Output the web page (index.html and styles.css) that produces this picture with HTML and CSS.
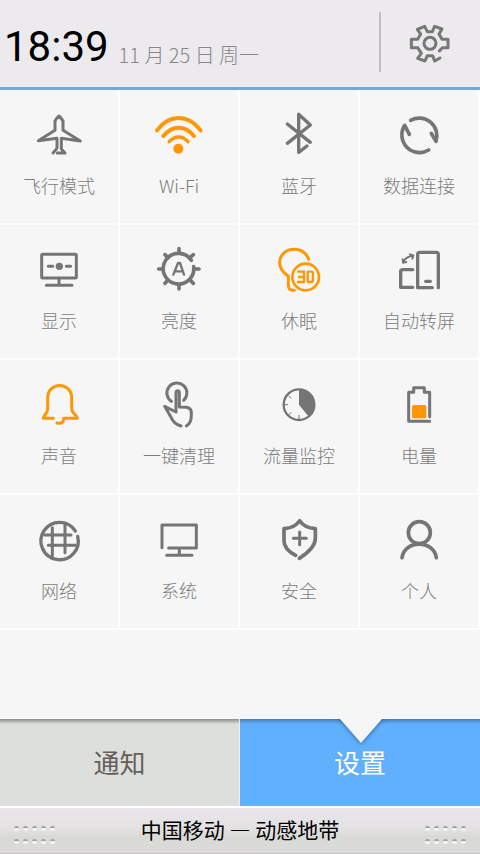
FILE: index.html
```html
<!DOCTYPE html>
<html lang="zh-CN">
<head>
<meta charset="utf-8">
<meta name="viewport" content="width=device-width, initial-scale=1">
<title>设置</title>
<link rel="stylesheet" href="styles.css">
</head>
<body>
<header class="header">
  <time class="clock">18:39</time>
  <span class="date">11 月 25 日 周一</span>
  <button class="gear" type="button" aria-label="设置">
    <svg class="gear-icon" viewBox="147 60 132 132"><path d="M238 153L247 143H264V118H246L237 102L246 87L224 79L217 95H202L194 79L172 88L182 102L173 118H154V143H173L184 160L173 175L195 183L202 167H218L224 183L240 174"/><circle cx="210" cy="130" r="18"/></svg>
  </button>
</header>
<main class="main">
  <div class="grid">
    <button class="tile" type="button">
      <svg class="icon" viewBox="87 45 180 180"><path d="M169 178L159 189M172 189H195L184 177V145L241 153L189 121V93Q184 84 177 78Q169 84 165 93V121L115 152L171 145V174"/></svg>
      <span class="label">飞行模式</span>
    </button>
    <button class="tile on" type="button">
      <svg class="icon" viewBox="447 45 180 180"><g stroke-width="12"><path d="M471 121Q498 84 536 84T602 121"/><path d="M490 138Q510 113 536 113T582 138"/></g><path stroke-width="10" d="M508 155Q521 141 536 141T564 155"/><circle class="solid" cx="535" cy="176" r="15"/></svg>
      <span class="label">Wi-Fi</span>
    </button>
    <button class="tile" type="button">
      <svg class="icon" viewBox="87 45 180 180"><path stroke-width="10" d="M142 102L211 157M142 160L211 105L176 73V187L201 168"/></svg>
      <span class="label">蓝牙</span>
    </button>
    <button class="tile" type="button">
      <svg class="icon" viewBox="447 45 180 180"><path stroke-width="11" d="M512 91A53 53 0 0 1 588 154L574 130M508 133L494 106A53 53 0 0 0 566 180"/></svg>
      <span class="label">数据连接</span>
    </button>
    <button class="tile" type="button">
      <svg class="icon" viewBox="87 45 180 180"><rect x="125" y="88" width="104" height="71" rx="3"/><path d="M177 160V181M139 181H216M145 124H158M199 124H212"/><circle class="solid" cx="178" cy="124" r="11"/></svg>
      <span class="label">显示</span>
    </button>
    <button class="tile" type="button">
      <svg class="icon" viewBox="447 45 180 180"><path stroke-width="11" d="M574 106A46 46 0 1 0 581 125"/><path stroke-width="11" d="M537 84V71M537 178V192M489 132H476M584 132H597M504 98L495 89M570 98L580 89M504 165L495 175M570 165L580 175"/><path stroke-width="7" d="M520 149L534 114H540L552 149M525 139H548"/></svg>
      <span class="label">亮度</span>
    </button>
    <button class="tile on" type="button">
      <svg class="icon" viewBox="87 45 180 180"><path d="M206 103C192 66 144 63 125 92C112 112 121 138 145 153V181Q145 197 163 196"/><circle stroke-width="8" cx="197" cy="156" r="40"/><path stroke-width="7" stroke-linecap="butt" d="M171 140H192V171H171M174 156H192M203 140H214Q219 140 219 146V165Q219 171 214 171H203Z"/></svg>
      <span class="label">休眠</span>
    </button>
    <button class="tile" type="button">
      <svg class="icon" viewBox="447 45 180 180"><path stroke-width="10" d="M595 188V88Q595 82 589 82H539Q533 82 533 88V188H577M518 134H488Q482 134 482 140V187H518M557 169H571"/><path stroke-width="6" d="M490 110Q497 96 517 92M510 88L520 91L517 101M488 103L489 113L499 111"/></svg>
      <span class="label">自动转屏</span>
    </button>
    <button class="tile on" type="button">
      <svg class="icon" viewBox="87 45 180 180"><path d="M160 175H130C133 162 143 161 143 146V114C143 64 215 64 215 114V146C215 161 229 162 232 175H191Q192 193 171 189"/></svg>
      <span class="label">声音</span>
    </button>
    <button class="tile" type="button">
      <svg class="icon" viewBox="447 45 180 180"><path d="M514 124A30 30 0 1 1 551 121"/><path d="M543 198Q520 190 514 173L494 139L528 156V98Q528 92 533 92Q538 92 538 98V141L560 142C573 145 575 152 574 162C574 182 571 190 559 198"/></svg>
      <span class="label">一键清理</span>
    </button>
    <button class="tile" type="button">
      <svg class="icon" viewBox="87 45 180 180"><circle stroke-width="7" cx="177" cy="134" r="46"/><path class="solid" d="M177 134V87A47 47 0 0 1 207 171Z"/><path stroke-width="3" d="M133 134H143M177 166V178M147 109L153 114M147 164L153 158"/></svg>
      <span class="label">流量监控</span>
    </button>
    <button class="tile" type="button">
      <svg class="icon" viewBox="447 45 180 180"><path d="M569 170V97H553V83H521V97H506V184H569"/><rect class="charge" x="516" y="135" width="43" height="40" rx="5"/></svg>
      <span class="label">电量</span>
    </button>
    <button class="tile" type="button">
      <svg class="icon" viewBox="87 45 180 180"><path stroke-width="10" d="M226 108A56 56 0 1 0 233 124"/><path d="M134 120H213M145 151H226M157 98V184M195 88V173"/></svg>
      <span class="label">网络</span>
    </button>
    <button class="tile" type="button">
      <svg class="icon" viewBox="447 45 180 180"><path d="M486 158V90H589V159H506M538 160V181M500 181H576"/></svg>
      <span class="label">系统</span>
    </button>
    <button class="tile" type="button">
      <svg class="icon" viewBox="87 45 180 180"><path stroke-width="11" d="M167 181Q132 163 132 137V101Q165 98 179 77Q193 98 226 101V130Q226 160 178 190"/><path d="M179 111V149M160 130H199"/></svg>
      <span class="label">安全</span>
    </button>
    <button class="tile" type="button">
      <svg class="icon" viewBox="447 45 180 180"><circle stroke-width="11" cx="538" cy="113" r="33"/><path stroke-width="11" d="M486 188C494 134 581 134 589 188"/></svg>
      <span class="label">个人</span>
    </button>
  </div>
</main>
<nav class="tabs">
  <button class="tab" type="button">通知</button>
  <button class="tab active" type="button">
    <svg class="notch" viewBox="0 0 50 34"><path d="M0 0L4 4L25 28L46 4L50 0Z"/></svg>设置
  </button>
</nav>
<footer class="footer">
  <div class="grip"><i></i><i></i><i></i><i></i><i></i><i></i><i></i><i></i><i></i><i></i></div>
  <span>中国移动 — 动感地带</span>
  <div class="grip"><i></i><i></i><i></i><i></i><i></i><i></i><i></i><i></i><i></i><i></i></div>
</footer>
</body>
</html>
```
FILE: styles.css
```css
* {
  box-sizing: border-box;
}

body {
  margin: 0;
  min-height: 100vh;
  display: flex;
  flex-direction: column;
  background: #f6f6f6;
  font-family: Roboto, "Noto Sans CJK SC", sans-serif;
}

button {
  margin: 0;
  padding: 0;
  border: 0;
  background: none;
  font: inherit;
  color: inherit;
}

svg {
  fill: none;
  stroke: currentColor;
  stroke-width: 9px;
  stroke-linecap: round;
  stroke-linejoin: round;
}

.header {
  height: 90px;
  padding: 12px 0 18px 4px;
  display: flex;
  align-items: flex-end;
  background: #eceaed;
  border-bottom: 3px solid #76a8d1;
}

.clock {
  font-size: 42px;
  line-height: 44px;
  color: #000;
}

.date {
  margin-left: 10px;
  font-family: "Noto Sans CJK SC", sans-serif;
  font-weight: 300;
  font-size: 20px;
  line-height: 28px;
  color: #888688;
}

.gear {
  width: 101px;
  height: 60px;
  margin-left: auto;
  align-self: flex-start;
  border-left: 2px solid #bfbdc0;
  color: #777;
  display: flex;
  align-items: center;
  justify-content: center;
}

.gear-icon {
  width: 44px;
  height: 44px;
}

.main {
  flex: 1;
}

.grid {
  display: grid;
  grid-template-columns: repeat(4, 1fr);
}

.tile {
  height: 135px;
  padding-top: 15px;
  display: flex;
  flex-direction: column;
  align-items: center;
  border: solid #fdfdfd;
  border-width: 0 2px 2px 0;
  color: #747574;
}

.tile.on {
  color: #ff9705;
}

.icon {
  width: 60px;
  height: 60px;
}

.solid,
.charge {
  fill: currentColor;
  stroke: none;
}

.charge {
  color: #ff9705;
}

.label {
  margin-top: 7px;
  font-family: "Noto Sans CJK SC", sans-serif;
  font-weight: 300;
  font-size: 18px;
  line-height: 26px;
  color: #7c7c7c;
}

.tabs {
  display: grid;
  grid-template-columns: 1fr 1fr;
  height: 89px;
  border-bottom: 2px solid #fff;
}

.tab {
  position: relative;
  overflow: hidden;
  padding-bottom: 2px;
  background: linear-gradient(#8b8d8b, #dcdfdc 5px);
  border-right: 1px solid #eee;
  font-family: "Noto Sans CJK SC", sans-serif;
  font-size: 26px;
  line-height: 36px;
  color: #655e59;
}

.tab.active {
  background: linear-gradient(#4280b8, #61b0fe 5px);
  border-right: 0;
  color: #fff;
}

.notch {
  position: absolute;
  top: -4px;
  left: calc(50% - 24px);
  width: 50px;
  height: 34px;
  fill: #f6f6f6;
  stroke: none;
  filter: drop-shadow(0 1px 2px #2b679c);
}

.footer {
  height: 46px;
  padding: 0 14px;
  display: flex;
  align-items: center;
  justify-content: space-between;
  background: linear-gradient(#e8e6e9, #e3e1e2 45%, #d9dad6 65%, #dcdadb);
  border-bottom: 1px solid #c5c3c4;
  font-family: "Noto Sans CJK SC", sans-serif;
  font-size: 21px;
  line-height: 28px;
  color: #000;
}

.footer span {
  padding-bottom: 3px;
}

.grip {
  display: grid;
  grid-template-columns: repeat(5, 5px);
  gap: 8px 4px;
  padding-top: 8px;
}

.grip i {
  height: 5px;
  border-radius: 50%;
  background: #f6f5f6;
  border-top: 2px solid #a09e9f;
}
```
